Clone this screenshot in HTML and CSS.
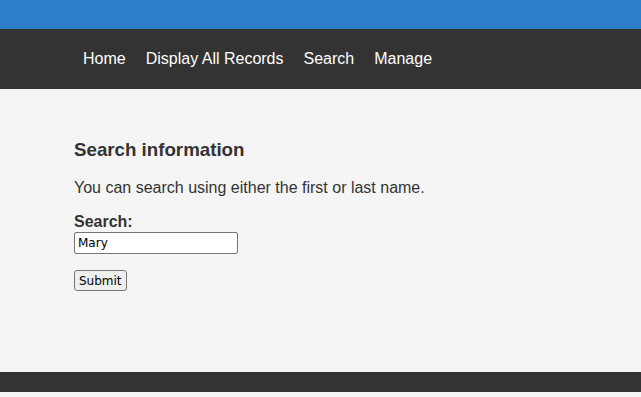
FILE: index.html
```html
<!DOCTYPE html>
<html lang="en">
<head>
  <meta charset="UTF-8" />
  <title>Search</title>
  <link rel="stylesheet" href="styles.css">
</head>
<body>
  <div class="topbar"></div>
  <nav class="nav">
    <a href="#">Home</a>
    <a href="#">Display All Records</a>
    <a href="#">Search</a>
    <a href="#">Manage</a>
  </nav>

  <main class="content">
    <h3>Search information</h3>
    <p>You can search using either the first or last name.</p>
    <form>
      <label for="q">Search:</label>
      <input type="text" id="q" value="Mary" />
      <button type="button">Submit</button>
    </form>
  </main>

  <footer class="footer"></footer>
</body>
</html>
```

FILE: styles.css
```css
body {
  margin: 0;
  font-family: "Liberation Sans", Arial, sans-serif;
  background-color: #f5f5f5;
  color: #333;
}

.topbar {
  height: 29px;
  background-color: #2b7ec7;
}

.nav {
  height: 60px;
  background-color: #333;
  display: flex;
  align-items: center;
  gap: 20px;
  padding-left: 83px;
}

.nav a {
  color: #fff;
  text-decoration: none;
  font-size: 16px;
}

.content {
  padding: 50px 74px 0;
  height: 233px;
}

.content h3 {
  font-size: 18.72px;
  margin: 0 0 18px;
}

.content p {
  font-size: 16px;
  margin: 0 0 16px;
}

label {
  display: block;
  font-weight: bold;
  font-size: 16px;
  margin-bottom: 1px;
}

input {
  display: block;
  width: 164px;
  height: 22px;
  box-sizing: border-box;
  border: 1px solid #767676;
  border-radius: 2px;
  padding: 1px 3px;
  font-family: "DejaVu Sans", Tahoma, sans-serif;
  font-size: 12px;
  color: #000;
  background: #fff;
  margin: 0 0 16px;
}

button {
  font-family: "DejaVu Sans", Tahoma, sans-serif;
  font-size: 12px;
  height: 21px;
  padding: 0 4px;
  border: 1px solid #767676;
  border-radius: 3px;
  background: #efefef;
  color: #000;
}

.footer {
  height: 20px;
  background-color: #333;
  margin-bottom: 5px;
}
```
